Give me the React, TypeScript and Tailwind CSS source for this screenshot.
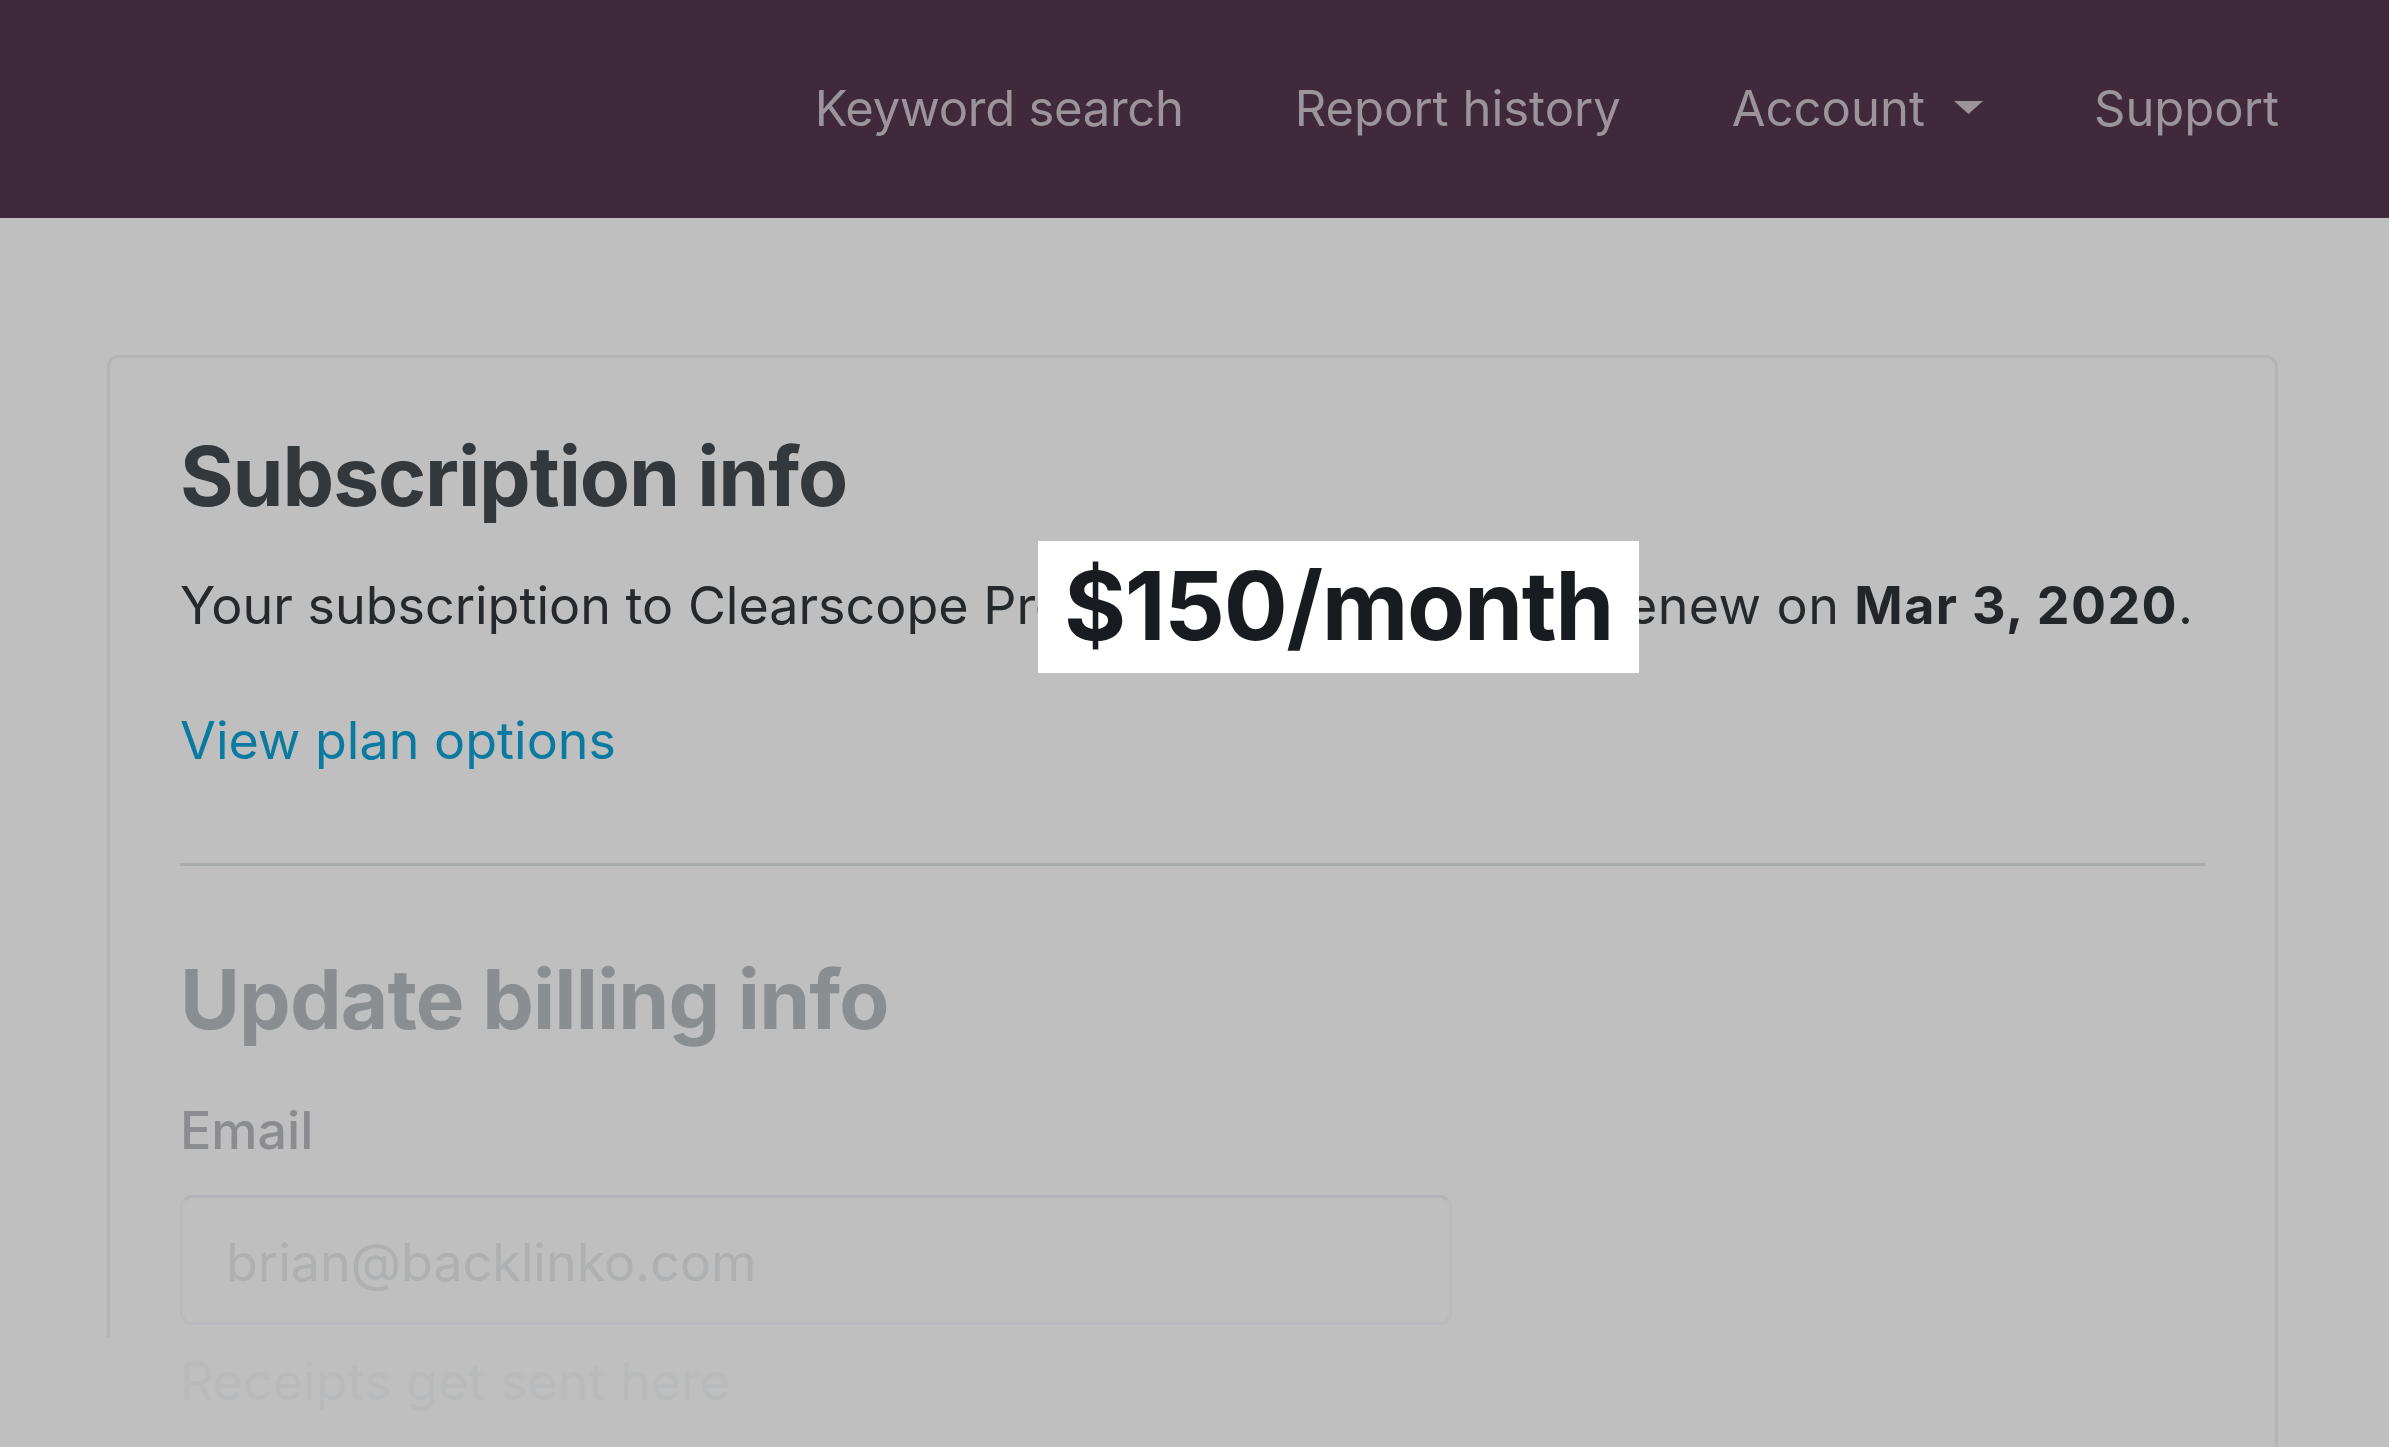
export default function App() {
  return (
    <div className="h-[1447px] overflow-hidden bg-[#bebfbe] font-['Inter',sans-serif]">
      <header className="flex h-[218px] items-center justify-end gap-[111px] bg-[#3f293a] pr-[110px] text-[49px] leading-[1.21] text-[#9c939b]">
        <span className="tracking-[-0.3px]">Keyword search</span>
        <span>Report history</span>
        <span className="flex items-center gap-[29px]">
          <span>Account</span>
          <svg width="29" height="13" viewBox="0 0 29 13" className="mt-[-4px]">
            <path d="M0 0H29L14.5 13Z" fill="currentColor" />
          </svg>
        </span>
        <span>Support</span>
      </header>
      <main className="pl-[107px] pr-[111px] pt-[137px]">
        <div className="relative rounded-[12px] border-[3px] border-[#b3b5b4] px-[70px] pb-[300px] pt-[69px]">
          <h2 className="text-[82px] font-bold leading-[1.21] tracking-[-1.1px] text-[#33383c]">Subscription info</h2>
          <p className="mt-[49px] flex items-center text-[52px] leading-[1.21] text-[#26292c]">
            <span className="w-[858px] shrink-0 overflow-hidden whitespace-nowrap">Your subscription to Clearscope Pro</span>
            <span className="relative z-10 -my-[35px] w-[601px] shrink-0 bg-white pb-[9px] pl-[26px] pt-[8px] text-[95px] font-bold leading-[1.21] tracking-[-1.4px] text-[#181c20]">
              $150/month
            </span>
            <span className="-ml-[12px] whitespace-nowrap tracking-[0.4px]">
              enew on <b className="font-bold tracking-[1.4px] text-[#232629]">Mar 3, 2020</b>.
            </span>
          </p>
          <a className="mt-[72px] block text-[52px] leading-[1.21] text-[#0b7aa1]">View plan options</a>
          <div className="mt-[90px] h-[3px] bg-[#a9acac]" />
          <h2 className="mt-[84px] text-[82px] font-bold leading-[1.21] tracking-[-0.9px] text-[#8b8e91]">Update billing info</h2>
          <div className="mt-[51px] text-[52px] font-medium leading-[1.21] text-[#8a8c8f]">Email</div>
          <div className="mt-[32px] flex h-[130px] w-[1272px] items-center rounded-[12px] border-[3px] border-[#b9babd] border-t-[#b2b3b6] pl-[43px] pt-[6px] text-[52px] leading-[1.21] text-[#aeb0b2]">
            brian@backlinko.com
          </div>
          <div className="mt-[26px] text-[52px] leading-[1.21] text-[#b9babc]">Receipts get sent here</div>
          <div className="absolute -left-[3px] top-[979px] h-[600px] w-[3px] bg-[#bebfbe]" />
        </div>
      </main>
    </div>
  );
}
